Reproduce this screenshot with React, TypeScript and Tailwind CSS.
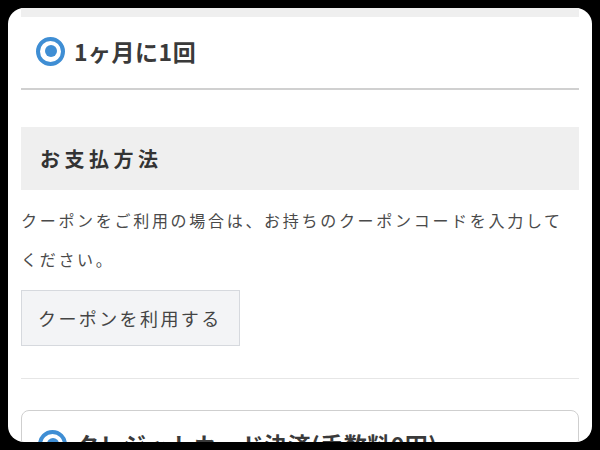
import React from "react";

const font = { fontFamily: '"Noto Sans CJK JP", "Noto Sans", sans-serif' };

function Radio() {
  return (
    <div className="w-[29px] h-[29px] rounded-full border-[4px] border-[#3f8ed4] flex items-center justify-center shrink-0">
      <div className="w-[12px] h-[12px] rounded-full bg-[#3f8ed4]" />
    </div>
  );
}

export default function App() {
  return (
    <div className="w-[600px] h-[450px] bg-black p-[8px]" style={font}>
      <div className="w-[584px] h-[434px] bg-white rounded-[16px] overflow-hidden px-[13px]">
        <div className="h-[9px] bg-[#efefef]" />
        <div className="flex items-center pt-[19px] pb-[22px] pl-[15px] gap-[9px]">
          <Radio />
          <span className="text-[23px] leading-[30px] font-bold tracking-[0.5px] text-[#3a3a3a]">1ヶ月に1回</span>
        </div>
        <div className="h-[2px] bg-[#d0d0d0]" />
        <div className="mt-[37px] h-[63px] bg-[#efefef] flex items-center pl-[19px]">
          <span className="text-[20px] font-bold tracking-[4.5px] text-[#333]">お支払方法</span>
        </div>
        <p className="mt-[11px] text-[16px] leading-[39px] tracking-[2.7px] text-[#4a4a4a]">
          クーポンをご利用の場合は、お持ちのクーポンコードを入力してください。
        </p>
        <div className="mt-[11px] w-[219px] h-[56px] bg-[#f3f4f6] border-[1.5px] border-[#d6d9de] flex items-center pl-[16px]">
          <span className="text-[18px] tracking-[2.4px] text-[#444]">クーポンを利用する</span>
        </div>
        <div className="mt-[32px] h-px bg-[#e6e6e6]" />
        <div className="mt-[31px] border-[1.5px] border-[#cfcfcf] rounded-[8px] pt-[18px] pl-[16px] pb-[20px] flex items-center gap-[9px]">
          <Radio />
          <span className="text-[23px] leading-[30px] font-bold tracking-[0.5px] text-[#3a3a3a]">クレジットカード決済(手数料0円)</span>
        </div>
      </div>
    </div>
  );
}
